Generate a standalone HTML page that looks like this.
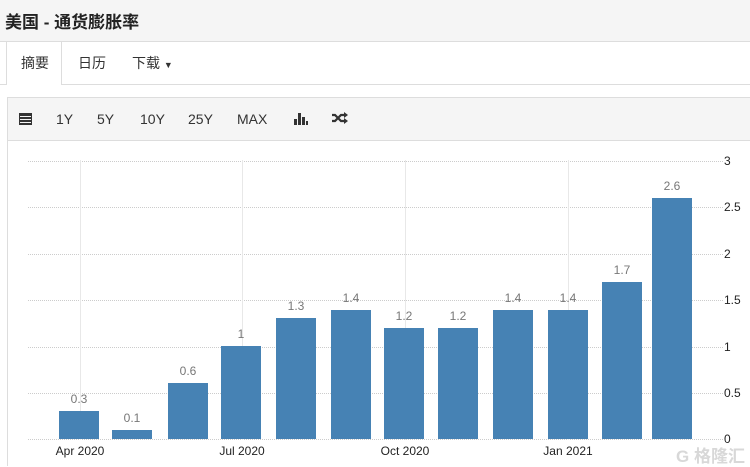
<!DOCTYPE html>
<html><head><meta charset="utf-8"><style>
*{margin:0;padding:0;box-sizing:border-box}
body{width:750px;height:466px;background:#fff;position:relative;overflow:hidden;font-family:"Liberation Sans","Noto Sans CJK SC",sans-serif;color:#333}
.a{position:absolute}
.title{left:0;top:0;width:750px;height:42px;background:#f5f5f5;border-bottom:1px solid #ddd;font-size:17px;font-weight:bold;padding:8px 0 0 5px;color:#222}
.tab{top:53px;font-size:14px;color:#333}
.tb{left:7px;top:97px;width:743px;height:44px;background:#f5f5f5;border:1px solid #ddd;border-right:none}
.tb span{position:absolute;top:13px;font-size:14px;color:#333}
.g{height:0;border-top:1px dotted #ccc;left:28px;width:695px}
.v{width:0;border-left:1px solid #e8e8e8;top:160px;height:280px}
.bar{background:#4682b4;width:40px}
.lab{font-size:12px;color:#777;width:40px;text-align:center}
.yl{left:724px;font-size:12px;color:#222}
.xl{top:444px;font-size:12px;color:#222;width:80px;text-align:center}
</style></head><body>
<div class="a title">美国 - 通货膨胀率</div>
<div class="a" style="left:0;top:84px;width:750px;border-top:1px solid #ddd"></div>
<div class="a" style="left:6px;top:42px;width:56px;height:43px;background:#fff;border-left:1px solid #ddd;border-right:1px solid #ddd"></div>
<div class="a tab" style="left:21px">摘要</div>
<div class="a tab" style="left:78px">日历</div>
<div class="a tab" style="left:132px">下载 <span style="font-size:9px">▼</span></div>
<div class="a tb">
<svg style="position:absolute;left:11px;top:14px" width="13" height="13" viewBox="0 0 13 13"><rect x="0" y="1" width="13" height="12" fill="#333"/><rect x="1" y="4" width="11" height="1" fill="#f5f5f5"/><rect x="1" y="7" width="11" height="1" fill="#f5f5f5"/><rect x="1" y="10" width="11" height="1" fill="#f5f5f5"/></svg>
<span style="left:48px">1Y</span><span style="left:89px">5Y</span><span style="left:132px">10Y</span><span style="left:180px">25Y</span><span style="left:229px">MAX</span>
<svg style="position:absolute;left:286px;top:14px" width="14" height="13" viewBox="0 0 14 13"><rect x="0" y="7" width="3" height="6" fill="#333"/><rect x="4" y="1" width="3" height="12" fill="#333"/><rect x="8" y="5" width="3" height="8" fill="#333"/><rect x="12" y="9" width="2" height="4" fill="#333"/></svg>
<svg style="position:absolute;left:324px;top:14px" width="16" height="12" viewBox="0 0 16 12"><path d="M0 3h3l6 6h4M0 9h3l6-6h4" stroke="#333" stroke-width="2.2" fill="none"/><path d="M12 0l4 3-4 3zM12 6l4 3-4 3z" fill="#333"/></svg>
</div>
<div class="a" style="left:7px;top:141px;height:325px;border-left:1px solid #ddd"></div>
<div class="a g" style="top:161px"></div><div class="a g" style="top:207px"></div><div class="a g" style="top:254px"></div><div class="a g" style="top:300px"></div><div class="a g" style="top:347px"></div><div class="a g" style="top:393px"></div><div class="a g" style="top:439px"></div>
<div class="a v" style="left:80px"></div><div class="a v" style="left:242px"></div><div class="a v" style="left:405px"></div><div class="a v" style="left:568px"></div>
<div class="a yl" style="top:154px">3</div><div class="a yl" style="top:200px">2.5</div><div class="a yl" style="top:247px">2</div><div class="a yl" style="top:293px">1.5</div><div class="a yl" style="top:340px">1</div><div class="a yl" style="top:386px">0.5</div><div class="a yl" style="top:432px">0</div>
<div class="a bar" style="left:59px;top:411px;height:28px"></div><div class="a lab" style="left:59px;top:392px">0.3</div>
<div class="a bar" style="left:112px;top:430px;height:9px"></div><div class="a lab" style="left:112px;top:411px">0.1</div>
<div class="a bar" style="left:168px;top:383px;height:56px"></div><div class="a lab" style="left:168px;top:364px">0.6</div>
<div class="a bar" style="left:221px;top:346px;height:93px"></div><div class="a lab" style="left:221px;top:327px">1</div>
<div class="a bar" style="left:276px;top:318px;height:121px"></div><div class="a lab" style="left:276px;top:299px">1.3</div>
<div class="a bar" style="left:331px;top:310px;height:129px"></div><div class="a lab" style="left:331px;top:291px">1.4</div>
<div class="a bar" style="left:384px;top:328px;height:111px"></div><div class="a lab" style="left:384px;top:309px">1.2</div>
<div class="a bar" style="left:438px;top:328px;height:111px"></div><div class="a lab" style="left:438px;top:309px">1.2</div>
<div class="a bar" style="left:493px;top:310px;height:129px"></div><div class="a lab" style="left:493px;top:291px">1.4</div>
<div class="a bar" style="left:548px;top:310px;height:129px"></div><div class="a lab" style="left:548px;top:291px">1.4</div>
<div class="a bar" style="left:602px;top:282px;height:157px"></div><div class="a lab" style="left:602px;top:263px">1.7</div>
<div class="a bar" style="left:652px;top:198px;height:241px"></div><div class="a lab" style="left:652px;top:179px">2.6</div>
<div class="a xl" style="left:40px">Apr 2020</div><div class="a xl" style="left:202px">Jul 2020</div><div class="a xl" style="left:365px">Oct 2020</div><div class="a xl" style="left:528px">Jan 2021</div>
<div class="a" style="left:676px;top:442px;font-size:17px;color:#d8d8d8;font-weight:bold">G 格隆汇</div>
</body></html>
